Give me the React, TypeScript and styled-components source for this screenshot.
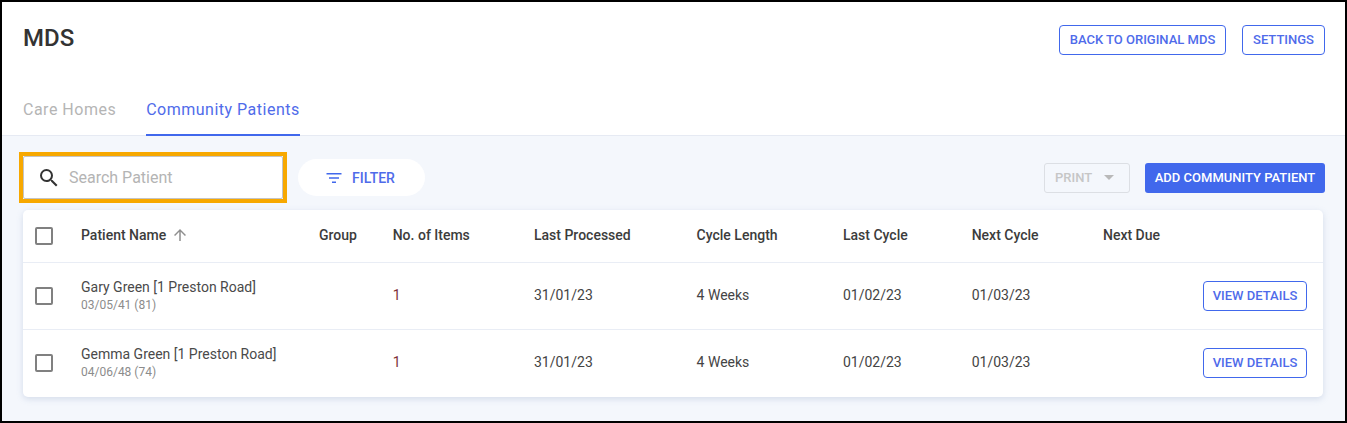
import React from "react";
import styled, { createGlobalStyle } from "styled-components";

const Global = createGlobalStyle`
  html, body { margin: 0; padding: 0; background: #fff; }
  body { font-family: Roboto, "Liberation Sans", sans-serif; }
  * { box-sizing: border-box; }
`;

const Frame = styled.div`
  width: 1347px;
  height: 423px;
  border: 2px solid #000;
  background: #f4f7fc;
  display: flex;
  flex-direction: column;
  overflow: hidden;
`;

const Header = styled.header`
  height: 134px;
  background: #fff;
  border-bottom: 1px solid #e6eaf3;
  display: flex;
  flex-direction: column;
  padding: 0 20px 0 21px;
  flex: none;
`;

const TopBar = styled.div`
  height: 77px;
  display: flex;
  justify-content: space-between;
  padding-top: 23px;
`;

const Title = styled.h1`
  margin: 0;
  font-size: 24px;
  line-height: 26px;
  font-weight: 500;
  color: #333;
`;

const Actions = styled.div`
  display: flex;
  gap: 16px;
  align-items: flex-start;
`;

const OutlineButton = styled.button<{ $width: number }>`
  width: ${(p) => p.$width}px;
  height: 30px;
  padding: 0;
  border: 1px solid #4168ec;
  border-radius: 4px;
  background: #fff;
  color: #4f6bea;
  font: 500 13px/28px Roboto, sans-serif;
  white-space: nowrap;
  cursor: pointer;
`;

const Tabs = styled.nav`
  display: flex;
  gap: 30px;
  height: 56px;
  margin-bottom: -1px;
`;

const Tab = styled.div<{ $active?: boolean }>`
  height: 57px;
  padding-top: 21px;
  font-size: 16px;
  line-height: 20px;
  letter-spacing: 0.5px;
  color: ${(p) => (p.$active ? "#4f6bea" : "#b5b5b5")};
  border-bottom: 2px solid ${(p) => (p.$active ? "#4168ec" : "transparent")};
`;

const Content = styled.main`
  flex: 1;
  padding: 16px 20px 0 21px;
`;

const Toolbar = styled.div`
  height: 58px;
  display: flex;
  align-items: flex-start;
`;

const SearchHighlight = styled.div`
  width: 268px;
  height: 51px;
  margin-left: -4px;
  border: 4px solid #f7a800;
  flex: none;
`;

const SearchBox = styled.div`
  height: 43px;
  background: #fff;
  border: 1px solid #c4c4c4;
  border-radius: 2px;
  display: flex;
  align-items: center;
  gap: 8px;
  padding-left: 13px;
  color: #b4b4b4;
  font-size: 16px;
`;

const FilterButton = styled.button`
  width: 127px;
  height: 37px;
  margin: 7px 0 0 11px;
  border: 0;
  border-radius: 19px;
  background: #fff;
  color: #4f6bea;
  font: 500 14px Roboto, sans-serif;
  display: flex;
  align-items: center;
  justify-content: center;
  gap: 9px;
  padding: 0 3px 0 0;
  flex: none;
`;

const ToolbarEnd = styled.div`
  margin-left: auto;
  margin-top: 11px;
  display: flex;
  gap: 15px;
`;

const PrintButton = styled.button`
  width: 86px;
  height: 30px;
  border: 1px solid #dcdfe4;
  border-radius: 3px;
  background: transparent;
  color: #c6c6c6;
  font: 500 13px Roboto, sans-serif;
  display: flex;
  align-items: center;
  padding: 0 0 1px 10px;
  gap: 12px;
`;

const Caret = styled.span`
  width: 0;
  height: 0;
  border-left: 5px solid transparent;
  border-right: 5px solid transparent;
  border-top: 5px solid #b9b9b9;
`;

const PrimaryButton = styled.button`
  width: 180px;
  height: 30px;
  border: 0;
  border-radius: 3px;
  background: #4168ec;
  color: #fff;
  font: 500 13px Roboto, sans-serif;
  padding: 0 0 1px;
  white-space: nowrap;
`;

const Card = styled.section`
  width: 1300px;
  padding-bottom: 1px;
  background: #fff;
  border-radius: 5px;
  box-shadow: 0 2px 6px rgba(130, 150, 190, 0.28);
`;

const Row = styled.div<{ $head?: boolean }>`
  display: grid;
  grid-template-columns: 58px 238px 73.7px 141.3px 162.6px 146.4px 128.7px 131.3px 1fr;
  align-items: center;
  height: ${(p) => (p.$head ? "53px" : "67px")};
  border-bottom: 1px solid #e9edf5;
  &:last-child { border-bottom: 0; height: 66px; }
`;

const HeadCell = styled.div`
  font-size: 14px;
  font-weight: 500;
  color: #3c3c3c;
  display: flex;
  align-items: center;
  gap: 5px;
  padding-bottom: 2px;
`;

const Cell = styled.div<{ $tone?: string }>`
  font-size: 14px;
  color: ${(p) => p.$tone ?? "#444"};
  padding-bottom: 2px;
`;

const CheckCell = styled.div`
  padding-left: 12px;
  display: flex;
`;

const CheckBox = styled.span`
  width: 18px;
  height: 18px;
  border: 2px solid #808080;
  border-radius: 2px;
  background: #fff;
`;

const NameCell = styled.div`
  padding-bottom: 1px;
`;

const Name = styled.div`
  font-size: 14px;
  line-height: 18px;
  color: #4a4a4a;
  white-space: nowrap;
`;

const Sub = styled.div`
  margin-top: 1px;
  font-size: 12px;
  line-height: 16px;
  color: #8c8c8c;
`;

const EndCell = styled.div`
  display: flex;
  justify-content: flex-end;
  padding-right: 16px;
`;

const SearchIcon = () => (
  <svg width="24" height="24" viewBox="0 0 24 24" fill="#333">
    <path d="M15.5 14h-.79l-.28-.27A6.47 6.47 0 0 0 16 9.5 6.5 6.5 0 1 0 9.5 16c1.61 0 3.09-.59 4.23-1.57l.27.28v.79l5 4.99L20.49 19l-4.99-5zm-6 0C7.01 14 5 11.99 5 9.5S7.01 5 9.5 5 14 7.01 14 9.5 11.99 14 9.5 14z" />
  </svg>
);

const FilterIcon = () => (
  <svg width="18" height="18" viewBox="0 0 18 18" fill="#4168ec">
    <path d="M1.5 4h15v1.5h-15zM4 8.2h10v1.5H4zM7 12.4h4v1.5H7z" />
  </svg>
);

const ArrowUp = () => (
  <svg width="18" height="18" viewBox="0 0 24 24" fill="#8f8f8f">
    <path d="M4 12l1.41 1.41L11 7.83V20h2V7.83l5.58 5.59L20 12l-8-8-8 8z" />
  </svg>
);

const patients = [
  { name: "Gary Green [1 Preston Road]", dob: "03/05/41 (81)" },
  { name: "Gemma Green [1 Preston Road]", dob: "04/06/48 (74)" },
];

export default function App() {
  return (
    <Frame>
      <Global />
      <Header>
        <TopBar>
          <Title>MDS</Title>
          <Actions>
            <OutlineButton $width={167}>BACK TO ORIGINAL MDS</OutlineButton>
            <OutlineButton $width={83}>SETTINGS</OutlineButton>
          </Actions>
        </TopBar>
        <Tabs>
          <Tab>Care Homes</Tab>
          <Tab $active>Community Patients</Tab>
        </Tabs>
      </Header>
      <Content>
        <Toolbar>
          <SearchHighlight>
            <SearchBox>
              <SearchIcon />
              Search Patient
            </SearchBox>
          </SearchHighlight>
          <FilterButton>
            <FilterIcon />
            FILTER
          </FilterButton>
          <ToolbarEnd>
            <PrintButton>
              PRINT
              <Caret />
            </PrintButton>
            <PrimaryButton>ADD COMMUNITY PATIENT</PrimaryButton>
          </ToolbarEnd>
        </Toolbar>
        <Card>
          <Row $head>
            <CheckCell>
              <CheckBox />
            </CheckCell>
            <HeadCell>
              Patient Name
              <ArrowUp />
            </HeadCell>
            <HeadCell>Group</HeadCell>
            <HeadCell>No. of Items</HeadCell>
            <HeadCell>Last Processed</HeadCell>
            <HeadCell>Cycle Length</HeadCell>
            <HeadCell>Last Cycle</HeadCell>
            <HeadCell>Next Cycle</HeadCell>
            <HeadCell>Next Due</HeadCell>
          </Row>
          {patients.map((p) => (
            <Row key={p.name}>
              <CheckCell>
                <CheckBox />
              </CheckCell>
              <NameCell>
                <Name>{p.name}</Name>
                <Sub>{p.dob}</Sub>
              </NameCell>
              <Cell />
              <Cell $tone="#7d3038">1</Cell>
              <Cell>31/01/23</Cell>
              <Cell>4 Weeks</Cell>
              <Cell>01/02/23</Cell>
              <Cell>01/03/23</Cell>
              <EndCell>
                <OutlineButton $width={104}>VIEW DETAILS</OutlineButton>
              </EndCell>
            </Row>
          ))}
        </Card>
      </Content>
    </Frame>
  );
}
